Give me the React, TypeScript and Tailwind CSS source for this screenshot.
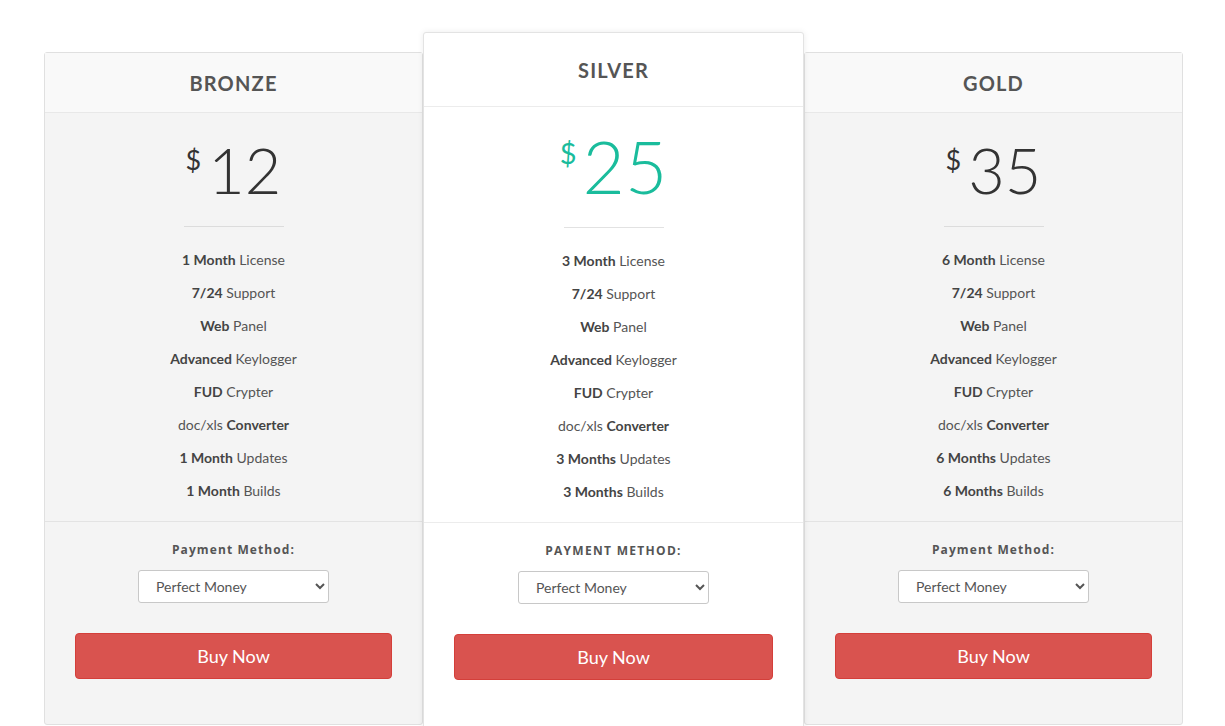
type Plan = {
  name: string;
  price: string;
  months: string;
  featured?: boolean;
};

const plans: Plan[] = [
  { name: "BRONZE", price: "12", months: "1" },
  { name: "SILVER", price: "25", months: "3", featured: true },
  { name: "GOLD", price: "35", months: "6" },
];

function Features({ months }: { months: string }) {
  const one = months === "1";
  const rows: [string, string, boolean][] = [
    [`${months} Month`, "License", true],
    ["7/24", "Support", true],
    ["Web", "Panel", true],
    ["Advanced", "Keylogger", true],
    ["FUD", "Crypter", true],
    ["doc/xls", "Converter", false],
    [one ? "1 Month" : `${months} Months`, "Updates", true],
    [one ? "1 Month" : `${months} Months`, "Builds", true],
  ];
  return (
    <ul className="text-[14px] text-[#555]">
      {rows.map(([a, b, boldFirst], i) => (
        <li key={i} className="h-[33px] leading-[33px] text-center">
          {boldFirst ? (
            <>
              <b className="font-bold text-[#444]">{a}</b> {b}
            </>
          ) : (
            <>
              {a} <b className="font-bold text-[#444]">{b}</b>
            </>
          )}
        </li>
      ))}
    </ul>
  );
}

function Card({ plan }: { plan: Plan }) {
  const f = plan.featured;
  return (
    <div
      className={
        f
          ? "relative z-10 w-[381px] -mt-[20px] bg-white border border-[#e3e3e3] rounded-[3px] shadow-[0_0_6px_rgba(0,0,0,0.08)] pb-[52px]"
          : "w-[379px] bg-[#f4f4f4] border border-[#e0e0e0] rounded-[3px] pb-[45px]"
      }
    >
      <div
        className={
          f
            ? "h-[74px] border-b border-[#ececec] flex items-center justify-center"
            : "h-[60px] bg-[#f9f9f9] border-b border-[#e8e8e8] flex items-center justify-center"
        }
      >
        <h3 className="text-[20px] font-bold tracking-[1.2px] text-[#555] font-['Lato',sans-serif]">
          {plan.name}
        </h3>
      </div>
      <div className="pt-[23px] flex justify-center items-start">
        <span
          className={
            f
              ? "text-[29px] leading-none mt-[8px] mr-[6px] text-[#1abc9c]"
              : "text-[27px] leading-none mt-[10px] mr-[7px] text-[#333]"
          }
        >
          $
        </span>
        <span
          className={
            f
              ? "text-[73px] leading-none font-light text-[#1abc9c]"
              : "text-[63px] leading-none font-light text-[#333] mt-[2px]"
          }
        >
          {plan.price}
        </span>
      </div>
      <div
        className={
          f
            ? "mx-auto mt-[24px] w-[100px] h-px bg-[#e2e2e2]"
            : "mx-auto mt-[25px] w-[100px] h-px bg-[#dcdcdc]"
        }
      />
      <div className="pt-[16px] pb-[14px]">
        <Features months={plan.months} />
      </div>
      <div
        className={
          f ? "border-t border-[#ececec] pt-[18px]" : "border-t border-[#e3e3e3] pt-[18px]"
        }
      >
        <p
          className={
            f
              ? "text-center text-[12px] leading-[20px] font-bold tracking-[1.3px] uppercase text-[#555] font-['Open_Sans',sans-serif]"
              : "text-center text-[12px] leading-[20px] font-bold tracking-[1.1px] text-[#555] font-['Open_Sans',sans-serif]"
          }
        >
          Payment Method:
        </p>
        <div className="mt-[10px] flex justify-center">
          <select className="w-[191px] h-[33px] pl-[13px] bg-white border border-[#c8c8c8] rounded-[3px] text-[14px] text-[#555]">
            <option>Perfect Money</option>
            <option>Bitcoin</option>
          </select>
        </div>
        <div className="mt-[30px] px-[30px]">
          <button className="w-full h-[46px] bg-[#d9534f] border border-[#d43f3a] rounded-[4px] text-white text-[18px] font-['Lato',sans-serif]">
            Buy Now
          </button>
        </div>
      </div>
    </div>
  );
}

export default function App() {
  return (
    <div className="min-h-screen bg-white font-['Lato',sans-serif] overflow-hidden">
      <div className="pt-[52px] pl-[2px] flex justify-center items-start">
        {plans.map((p) => (
          <Card key={p.name} plan={p} />
        ))}
      </div>
    </div>
  );
}
